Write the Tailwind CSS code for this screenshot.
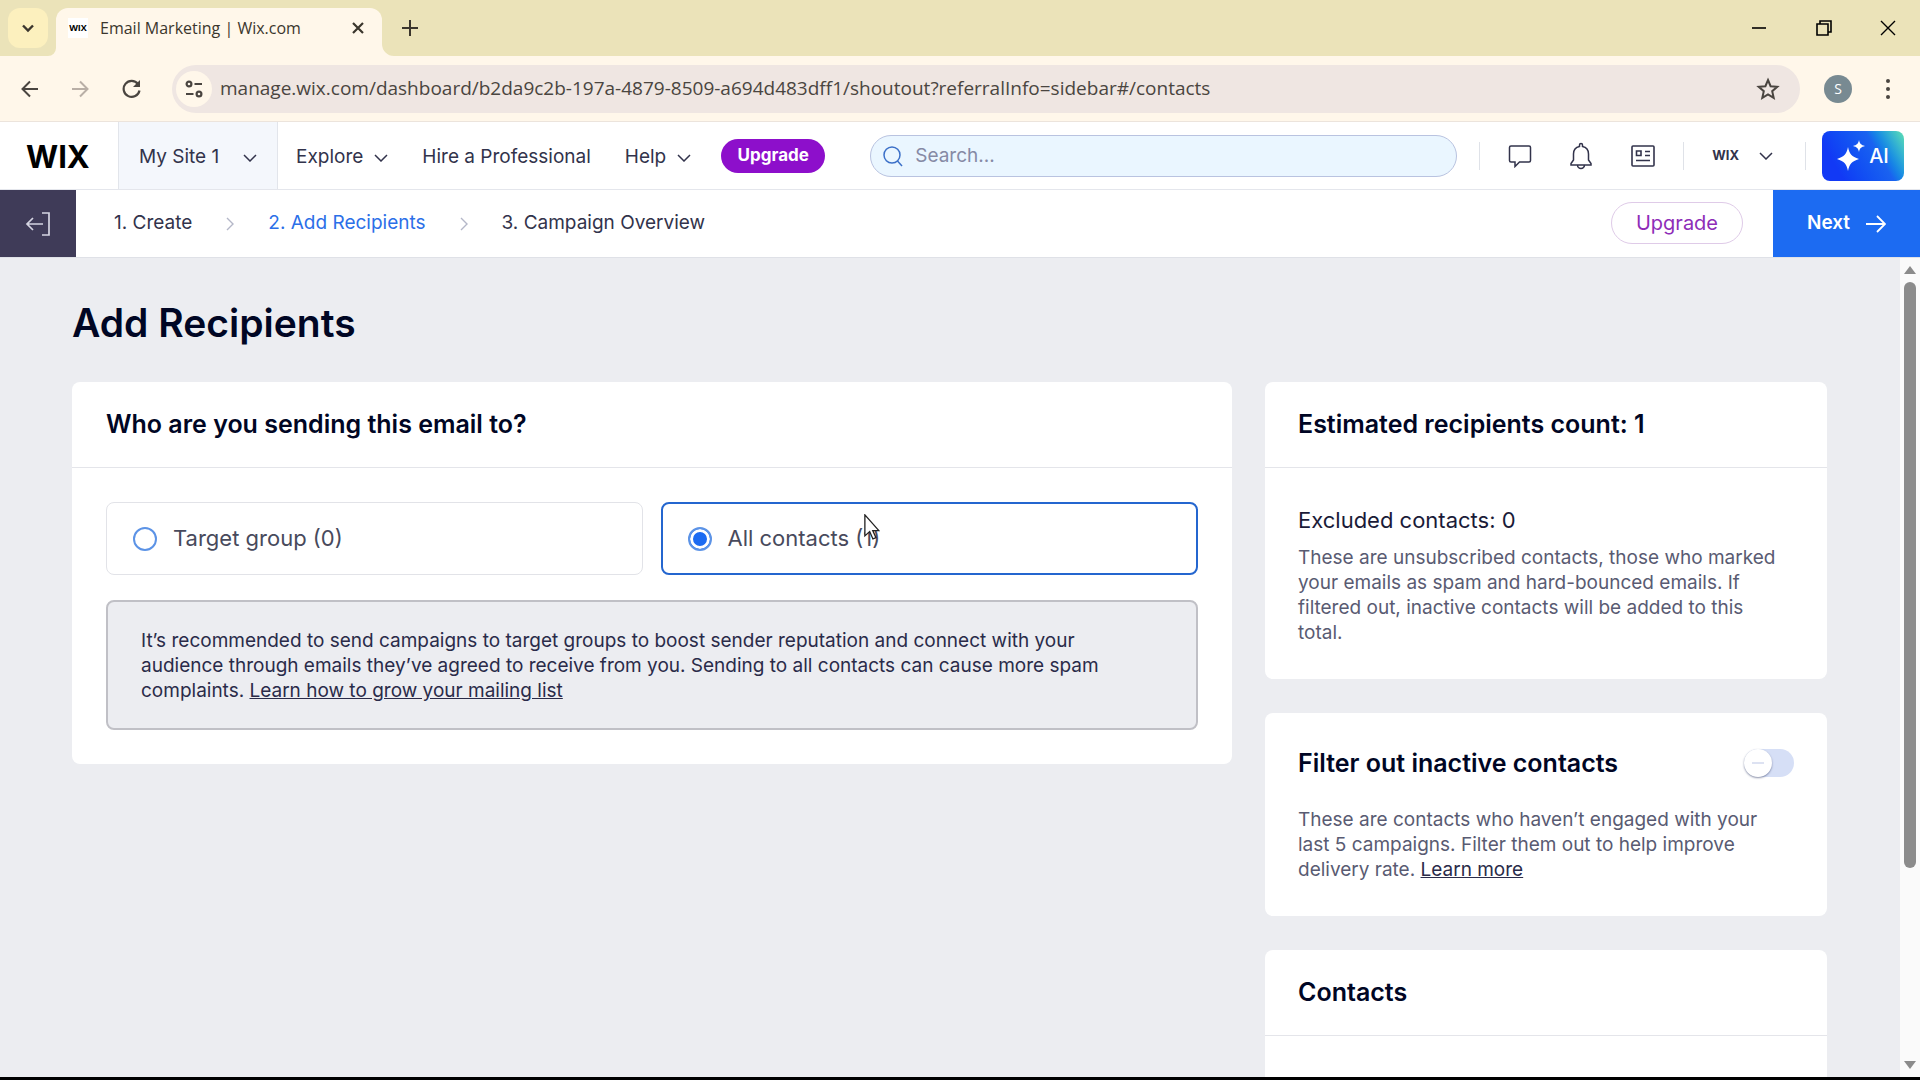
<!DOCTYPE html>
<html lang="en">
<head>
  <meta charset="UTF-8">
  <meta name="viewport" content="width=device-width, initial-scale=1.0">
  <title>Email Marketing | Wix.com</title>
  <script src="https://cdn.jsdelivr.net/npm/@tailwindcss/browser@4"></script>
</head>
<body class="h-screen flex flex-col overflow-hidden bg-black pb-[3px] font-['Inter','Liberation_Sans',sans-serif] text-[19px] text-[#32334b]">

  <!-- Browser tabs -->
  <div class="h-14 shrink-0 flex items-end bg-[#ebe3b9] pl-2 font-['Open_Sans',sans-serif] text-[#3b362d]">
    <button type="button" aria-label="Search tabs" class="w-10 h-10 mb-2 rounded-xl bg-[#fcf0be] flex items-center justify-center">
      <svg class="w-4 h-4" viewBox="0 0 16 16" fill="none" stroke="currentColor" stroke-width="2.4"><path d="M3 5.5 8 10.5 13 5.5"/></svg>
    </button>
    <svg class="w-2 h-2 text-[#fff7ea]" viewBox="0 0 12 12" fill="currentColor"><path d="M12 0v12H0A12 12 0 0 0 12 0z"/></svg>
    <div class="w-[326px] h-12 rounded-t-xl bg-[#fff7ea] flex items-center pl-3 pr-3 pb-2">
      <span class="w-5 h-5 bg-white text-black text-[9px] font-bold flex items-center justify-center" aria-hidden="true">WIX</span>
      <span class="ml-3 grow text-base">Email Marketing | Wix.com</span>
      <button type="button" aria-label="Close tab" class="w-6 h-6 flex items-center justify-center">
        <svg class="w-4 h-4" viewBox="0 0 16 16" fill="none" stroke="currentColor" stroke-width="2.2"><path d="M3 3l10 10M13 3 3 13"/></svg>
      </button>
    </div>
    <svg class="w-3 h-3 text-[#fff7ea]" viewBox="0 0 12 12" fill="currentColor"><path d="M0 0v12h12A12 12 0 0 1 0 0z"/></svg>
    <button type="button" aria-label="New tab" class="w-8 h-12 pb-2 flex items-center justify-center">
      <svg class="w-4 h-4" viewBox="0 0 16 16" fill="none" stroke="currentColor" stroke-width="2"><path d="M8 0v16M0 8h16"/></svg>
    </button>
    <div class="ml-auto h-14 flex text-black">
      <button type="button" aria-label="Minimize" class="w-[65px] h-full flex items-center justify-center">
        <svg class="w-4 h-4" viewBox="0 0 16 16" fill="none" stroke="currentColor" stroke-width="1.6"><path d="M1 8h14"/></svg>
      </button>
      <button type="button" aria-label="Restore" class="w-[65px] h-full flex items-center justify-center">
        <svg class="w-4 h-4" viewBox="0 0 16 16" fill="none" stroke="currentColor" stroke-width="1.6"><path d="M1 4h11v11H1zM4 4V1h11v11h-3"/></svg>
      </button>
      <button type="button" aria-label="Close" class="w-16 h-full flex items-center justify-center">
        <svg class="w-4 h-4" viewBox="0 0 16 16" fill="none" stroke="currentColor" stroke-width="1.4"><path d="M1 1l14 14M15 1 1 15"/></svg>
      </button>
    </div>
  </div>

  <!-- Address bar -->
  <div class="h-[66px] shrink-0 flex items-center bg-[#fff7ea] border-b border-[#ece4dc] pl-4 pr-5 text-[#4a4540] font-['Open_Sans',sans-serif]">
    <button type="button" aria-label="Back" class="w-7 flex justify-center">
      <svg class="w-[18px] h-[18px]" viewBox="0 0 18 18" fill="none" stroke="currentColor" stroke-width="2"><path d="M17 9H2M9 1.500 1.500 9 9 16.500"/></svg>
    </button>
    <button type="button" aria-label="Forward" class="w-7 ml-[22px] flex justify-center text-[#b9afa6]">
      <svg class="w-[18px] h-[18px]" viewBox="0 0 18 18" fill="none" stroke="currentColor" stroke-width="2"><path d="M1 9h15M9 1.500 16.500 9 9 16.500"/></svg>
    </button>
    <button type="button" aria-label="Reload" class="w-7 ml-6 flex justify-center">
      <svg class="w-5 h-5" viewBox="0 0 20 20" fill="none" stroke="currentColor" stroke-width="2.2"><path d="M17.500 11.500A8 8 0 1 1 16 5"/><path d="M18 1v7h-7z" fill="currentColor" stroke="none"/></svg>
    </button>
    <div class="ml-[26px] grow h-12 rounded-full bg-[#efe6e2] flex items-center pl-1 pr-5">
      <span class="w-9 h-9 rounded-full bg-[#fff7ea] flex items-center justify-center">
        <svg class="w-[18px] h-[18px]" viewBox="0 0 18 18" fill="none" stroke="currentColor" stroke-width="2.2"><circle cx="4" cy="4" r="2.400"/><path d="M9.500 4H17M1 14h7.500"/><circle cx="14" cy="14" r="2.400"/></svg>
      </span>
      <input type="text" aria-label="Address" value="manage.wix.com/dashboard/b2da9c2b-197a-4879-8509-a694d483dff1/shoutout?referralInfo=sidebar#/contacts" class="ml-2 grow bg-transparent outline-none text-[19px]">
      <button type="button" aria-label="Bookmark">
        <svg class="w-6 h-6" viewBox="0 0 24 24" fill="none" stroke="currentColor" stroke-width="2"><path d="M12 3l2.600 6.200 6.700.600-5.100 4.400 1.500 6.600L12 17.300l-5.700 3.500 1.500-6.600L2.700 9.800l6.700-.600z"/></svg>
      </button>
    </div>
    <span class="ml-6 w-7 h-7 rounded-full bg-[#788a92] text-white text-sm flex items-center justify-center">S</span>
    <button type="button" aria-label="Menu" class="ml-6 w-6 flex justify-center">
      <svg class="w-6 h-6" viewBox="0 0 24 24" fill="currentColor"><circle cx="12" cy="4" r="2"/><circle cx="12" cy="12" r="2"/><circle cx="12" cy="20" r="2"/></svg>
    </button>
  </div>

  <!-- Site header -->
  <header class="h-[68px] shrink-0 flex items-center bg-white border-b border-[#e4e6ec] pr-4">
    <a href="#" class="w-[118px] pl-[26px] pt-1 text-[31px] font-bold text-black">WIX</a>
    <button type="button" class="w-40 h-full pt-1 border-x border-[#e2e5eb] bg-[#f4f7fc] flex items-center justify-between px-5">
      My Site 1
      <svg class="w-[14px] h-2" viewBox="0 0 14 8" fill="none" stroke="currentColor" stroke-width="1.500"><path d="M1 1l6 6 6-6"/></svg>
    </button>
    <nav class="flex items-center pt-1 ml-[18px] gap-[34px]">
      <button type="button" class="flex items-center gap-[11px]">Explore
        <svg class="w-[14px] h-2" viewBox="0 0 14 8" fill="none" stroke="currentColor" stroke-width="1.500"><path d="M1 1l6 6 6-6"/></svg>
      </button>
      <a href="#">Hire a Professional</a>
      <button type="button" class="flex items-center gap-[11px]">Help
        <svg class="w-[14px] h-2" viewBox="0 0 14 8" fill="none" stroke="currentColor" stroke-width="1.500"><path d="M1 1l6 6 6-6"/></svg>
      </button>
    </nav>
    <button type="button" class="ml-[30px] w-[104px] h-[34px] rounded-full bg-[#8d0fcb] text-white text-[17px] font-bold">Upgrade</button>
    <label class="ml-[45px] grow h-[42px] rounded-full border border-[#b9c3e0] bg-[#eaf6ff] flex items-center pl-3 text-[#3c70c8]">
      <svg class="w-5 h-6" viewBox="0 0 20 24" fill="none" stroke="currentColor" stroke-width="1.500"><circle cx="9" cy="11" r="8"/><path d="M14.500 17 19 22"/></svg>
      <input type="text" aria-label="Search" placeholder="Search..." class="ml-3 grow min-w-0 pt-0.5 bg-transparent outline-none placeholder:text-[#868aa5]">
    </label>
    <div class="ml-[22px] flex items-center">
      <span class="w-px h-7 bg-[#dfe2e8]"></span>
      <button type="button" aria-label="Inbox" class="ml-7">
        <svg class="w-6 h-6" viewBox="0 0 24 24" fill="none" stroke="currentColor" stroke-width="1.500"><path d="M3 2h18a1.500 1.500 0 0 1 1.500 1.500v13A1.500 1.500 0 0 1 21 18H11.500L7 22.500V18H3a1.500 1.500 0 0 1-1.500-1.500v-13A1.500 1.500 0 0 1 3 2z"/></svg>
      </button>
      <button type="button" aria-label="Notifications" class="ml-[37px]">
        <svg class="w-6 h-7" viewBox="0 0 24 28" fill="none" stroke="currentColor" stroke-width="1.500"><path d="M10.500 4.500V3a1.500 1.500 0 0 1 3 0v1.500c4 .800 6 3.800 6 7.500v6l2.500 3.500v1.500H2v-1.500L4.500 18v-6c0-3.700 2-6.700 6-7.500zM8.500 23a3.500 3.500 0 0 0 7 0"/></svg>
      </button>
      <button type="button" aria-label="News" class="ml-[38px]">
        <svg class="w-6 h-6" viewBox="0 0 24 24" fill="none" stroke="currentColor" stroke-width="1.600"><rect x="1" y="2" width="22" height="20" rx="1"/><path d="M5.500 7h4.500v4.500H5.500zM14 7.500h5M14 11.500h5M5 16.500h14"/></svg>
      </button>
      <span class="ml-7 w-px h-7 bg-[#dfe2e8]"></span>
      <button type="button" class="ml-7 flex items-center gap-5 text-[13px] font-bold">WIX
        <svg class="w-[14px] h-2" viewBox="0 0 14 8" fill="none" stroke="currentColor" stroke-width="1.500"><path d="M1 1l6 6 6-6"/></svg>
      </button>
      <span class="ml-8 w-px h-7 bg-[#dfe2e8]"></span>
      <button type="button" class="ml-4 w-[82px] h-[50px] rounded-lg bg-linear-60 from-[#1239f5] from-20% via-[#1a62f0] via-65% to-[#5fe0b0] text-white text-xl font-medium flex items-center justify-center gap-1">
        <svg class="w-7 h-8" viewBox="0 0 28 32" fill="currentColor"><path d="M11 7c1.500 7 3.500 9.500 11 12-7.500 2.500-9.500 5-11 12-1.500-7-3.500-9.500-11-12 7.500-2.500 9.500-5 11-12zM22 0c.700 3.500 2 5 6 6-4 1-5.300 2.500-6 6-.700-3.500-2-5-6-6 4-1 5.300-2.500 6-6z"/></svg>
        AI
      </button>
    </div>
  </header>

  <!-- Campaign steps -->
  <div class="h-[68px] shrink-0 flex items-center bg-white border-b border-[#dfe1e7]">
    <button type="button" aria-label="Exit" class="w-[76px] h-[67px] bg-[#3f3b58] text-[#d5d5e2] flex items-center justify-center">
      <svg class="w-[26px] h-6" viewBox="0 0 26 24" fill="none" stroke="currentColor" stroke-width="1.700"><path d="M18 12H2M8 6l-6 6 6 6M17 1h7v22h-7"/></svg>
    </button>
    <ol class="ml-[38px] flex items-center gap-[34px]">
      <li>1. Create</li>
      <li aria-hidden="true"><svg class="w-2 h-[14px]" viewBox="0 0 8 14" fill="none" stroke="#b4b7c8" stroke-width="1.400"><path d="M1 1l6 6-6 6"/></svg></li>
      <li class="text-[#2b6fe8]" aria-current="step">2. Add Recipients</li>
      <li aria-hidden="true"><svg class="w-2 h-[14px]" viewBox="0 0 8 14" fill="none" stroke="#b4b7c8" stroke-width="1.400"><path d="M1 1l6 6-6 6"/></svg></li>
      <li>3. Campaign Overview</li>
    </ol>
    <button type="button" class="ml-auto w-[132px] h-[42px] mb-0.5 rounded-full border border-[#dfcbe8] text-[#8e2db8] text-xl">Upgrade</button>
    <button type="button" class="ml-[30px] w-[147px] h-[67px] bg-[#1c6bf2] text-white font-semibold flex items-center justify-center gap-4">Next
      <svg class="w-5 h-5" viewBox="0 0 20 20" fill="none" stroke="currentColor" stroke-width="1.800"><path d="M0 10h19M11 2l8 8-8 8"/></svg>
    </button>
  </div>

  <div class="grow min-h-0 flex">
    <main class="grow overflow-hidden bg-[#ecedf1] pl-[72px] pr-[73px] pt-10">
      <h1 class="text-[39px] leading-[50px] font-semibold text-[#000624]">Add Recipients</h1>

      <div class="mt-[34px] flex items-start gap-[33px]">
        <section class="grow rounded-lg bg-white">
          <h2 class="h-[86px] border-b border-[#e4e5ea] px-[34px] flex items-center text-[25px] font-semibold text-[#000624]">Who are you sending this email to?</h2>
          <div class="px-[34px] pt-[34px] pb-[34px]">
            <div class="flex gap-[18px] text-[22px] text-[#484a5c]">
              <label class="flex-1 h-[73px] rounded-lg border border-[#e2e3e8] flex items-center gap-4 pl-[26px]">
                <input type="radio" name="recipients" class="appearance-none w-6 h-6 rounded-full border-2 border-[#5c93e6] bg-white checked:bg-[#1c6bf2] checked:shadow-[inset_0_0_0_3px_white]">
                Target group (0)
              </label>
              <label class="flex-1 h-[73px] rounded-lg border-2 border-[#2466cf] flex items-center gap-4 pl-[25px]">
                <input type="radio" name="recipients" checked class="appearance-none w-6 h-6 rounded-full border-2 border-[#5c93e6] bg-white checked:bg-[#1c6bf2] checked:shadow-[inset_0_0_0_3px_white]">
                <span class="relative">All contacts (1)
                  <!-- mouse pointer -->
                  <svg class="absolute right-0 -top-2 w-[18px] h-7" viewBox="0 0 20 32" fill="#fff" stroke="#222" stroke-width="1.500"><path d="M3 1v24l5.500-5 3.700 8.500 3.500-1.500-3.700-8H19z"/></svg>
                </span>
              </label>
            </div>
            <div class="mt-[25px] rounded-lg border-2 border-[#c0c0c6] bg-[#ecedf1] pl-[33px] pr-20 pt-[26px] pb-[25px] leading-[25px] text-[#2a2b49]">
              <p>It’s recommended to send campaigns to target groups to boost sender reputation and connect with your audience through emails they’ve agreed to receive from you. Sending to all contacts can cause more spam complaints. <a href="#" class="underline">Learn how to grow your mailing list</a></p>
            </div>
          </div>
        </section>

        <aside class="w-[562px] shrink-0 flex flex-col gap-[34px]">
          <section class="rounded-lg bg-white">
            <h2 class="h-[86px] border-b border-[#e4e5ea] px-[33px] flex items-center text-[25px] font-semibold text-[#000624]">Estimated recipients count: 1</h2>
            <div class="pl-[33px] pr-12 pt-9 pb-[34px]">
              <h3 class="text-[22px] leading-8 text-[#1a1b38]">Excluded contacts: 0</h3>
              <p class="mt-[9px] leading-[25px] text-[#595b72]">These are unsubscribed contacts, those who marked your emails as spam and hard-bounced emails. If filtered out, inactive contacts will be added to this total.</p>
            </div>
          </section>

          <section class="rounded-lg bg-white px-[33px] pt-[34px] pb-[34px]">
            <div class="flex items-center justify-between">
              <label for="filter" class="text-[25px] leading-8 font-semibold text-[#000624]">Filter out inactive contacts</label>
              <span class="relative w-[50px] h-7">
                <input id="filter" type="checkbox" role="switch" class="block appearance-none w-full h-full rounded-full bg-[#d6dff6]">
                <span class="absolute left-0 top-0 w-7 h-7 rounded-full bg-white shadow-[0_1px_2px_rgb(60,70,110,0.6)] flex items-center justify-center pointer-events-none">
                  <span class="w-3 h-0.5 bg-[#dde2f2]"></span>
                </span>
              </span>
            </div>
            <p class="mt-7 leading-[25px] text-[#595b72]">These are contacts who haven’t engaged with your last 5 campaigns. Filter them out to help improve delivery rate. <a href="#" class="underline text-[#2a2b49]">Learn more</a></p>
          </section>

          <section class="rounded-lg bg-white">
            <h2 class="h-[86px] border-b border-[#e4e5ea] px-[33px] flex items-center text-[25px] font-semibold text-[#000624]">Contacts</h2>
            <div class="h-[120px]"></div>
          </section>
        </aside>
      </div>
    </main>

    <!-- Scrollbar -->
    <div class="w-5 shrink-0 bg-[#fafafa] flex flex-col items-center py-2 text-[#8b8b8b]" aria-hidden="true">
      <svg class="w-3 h-2" viewBox="0 0 12 8" fill="currentColor"><path d="M6 0l6 8H0z"/></svg>
      <div class="mt-2 w-3 h-[73%] rounded-full bg-[#8b8b8b]"></div>
      <svg class="mt-auto w-3 h-2" viewBox="0 0 12 8" fill="currentColor"><path d="M6 8 0 0h12z"/></svg>
    </div>
  </div>
</body>
</html>
